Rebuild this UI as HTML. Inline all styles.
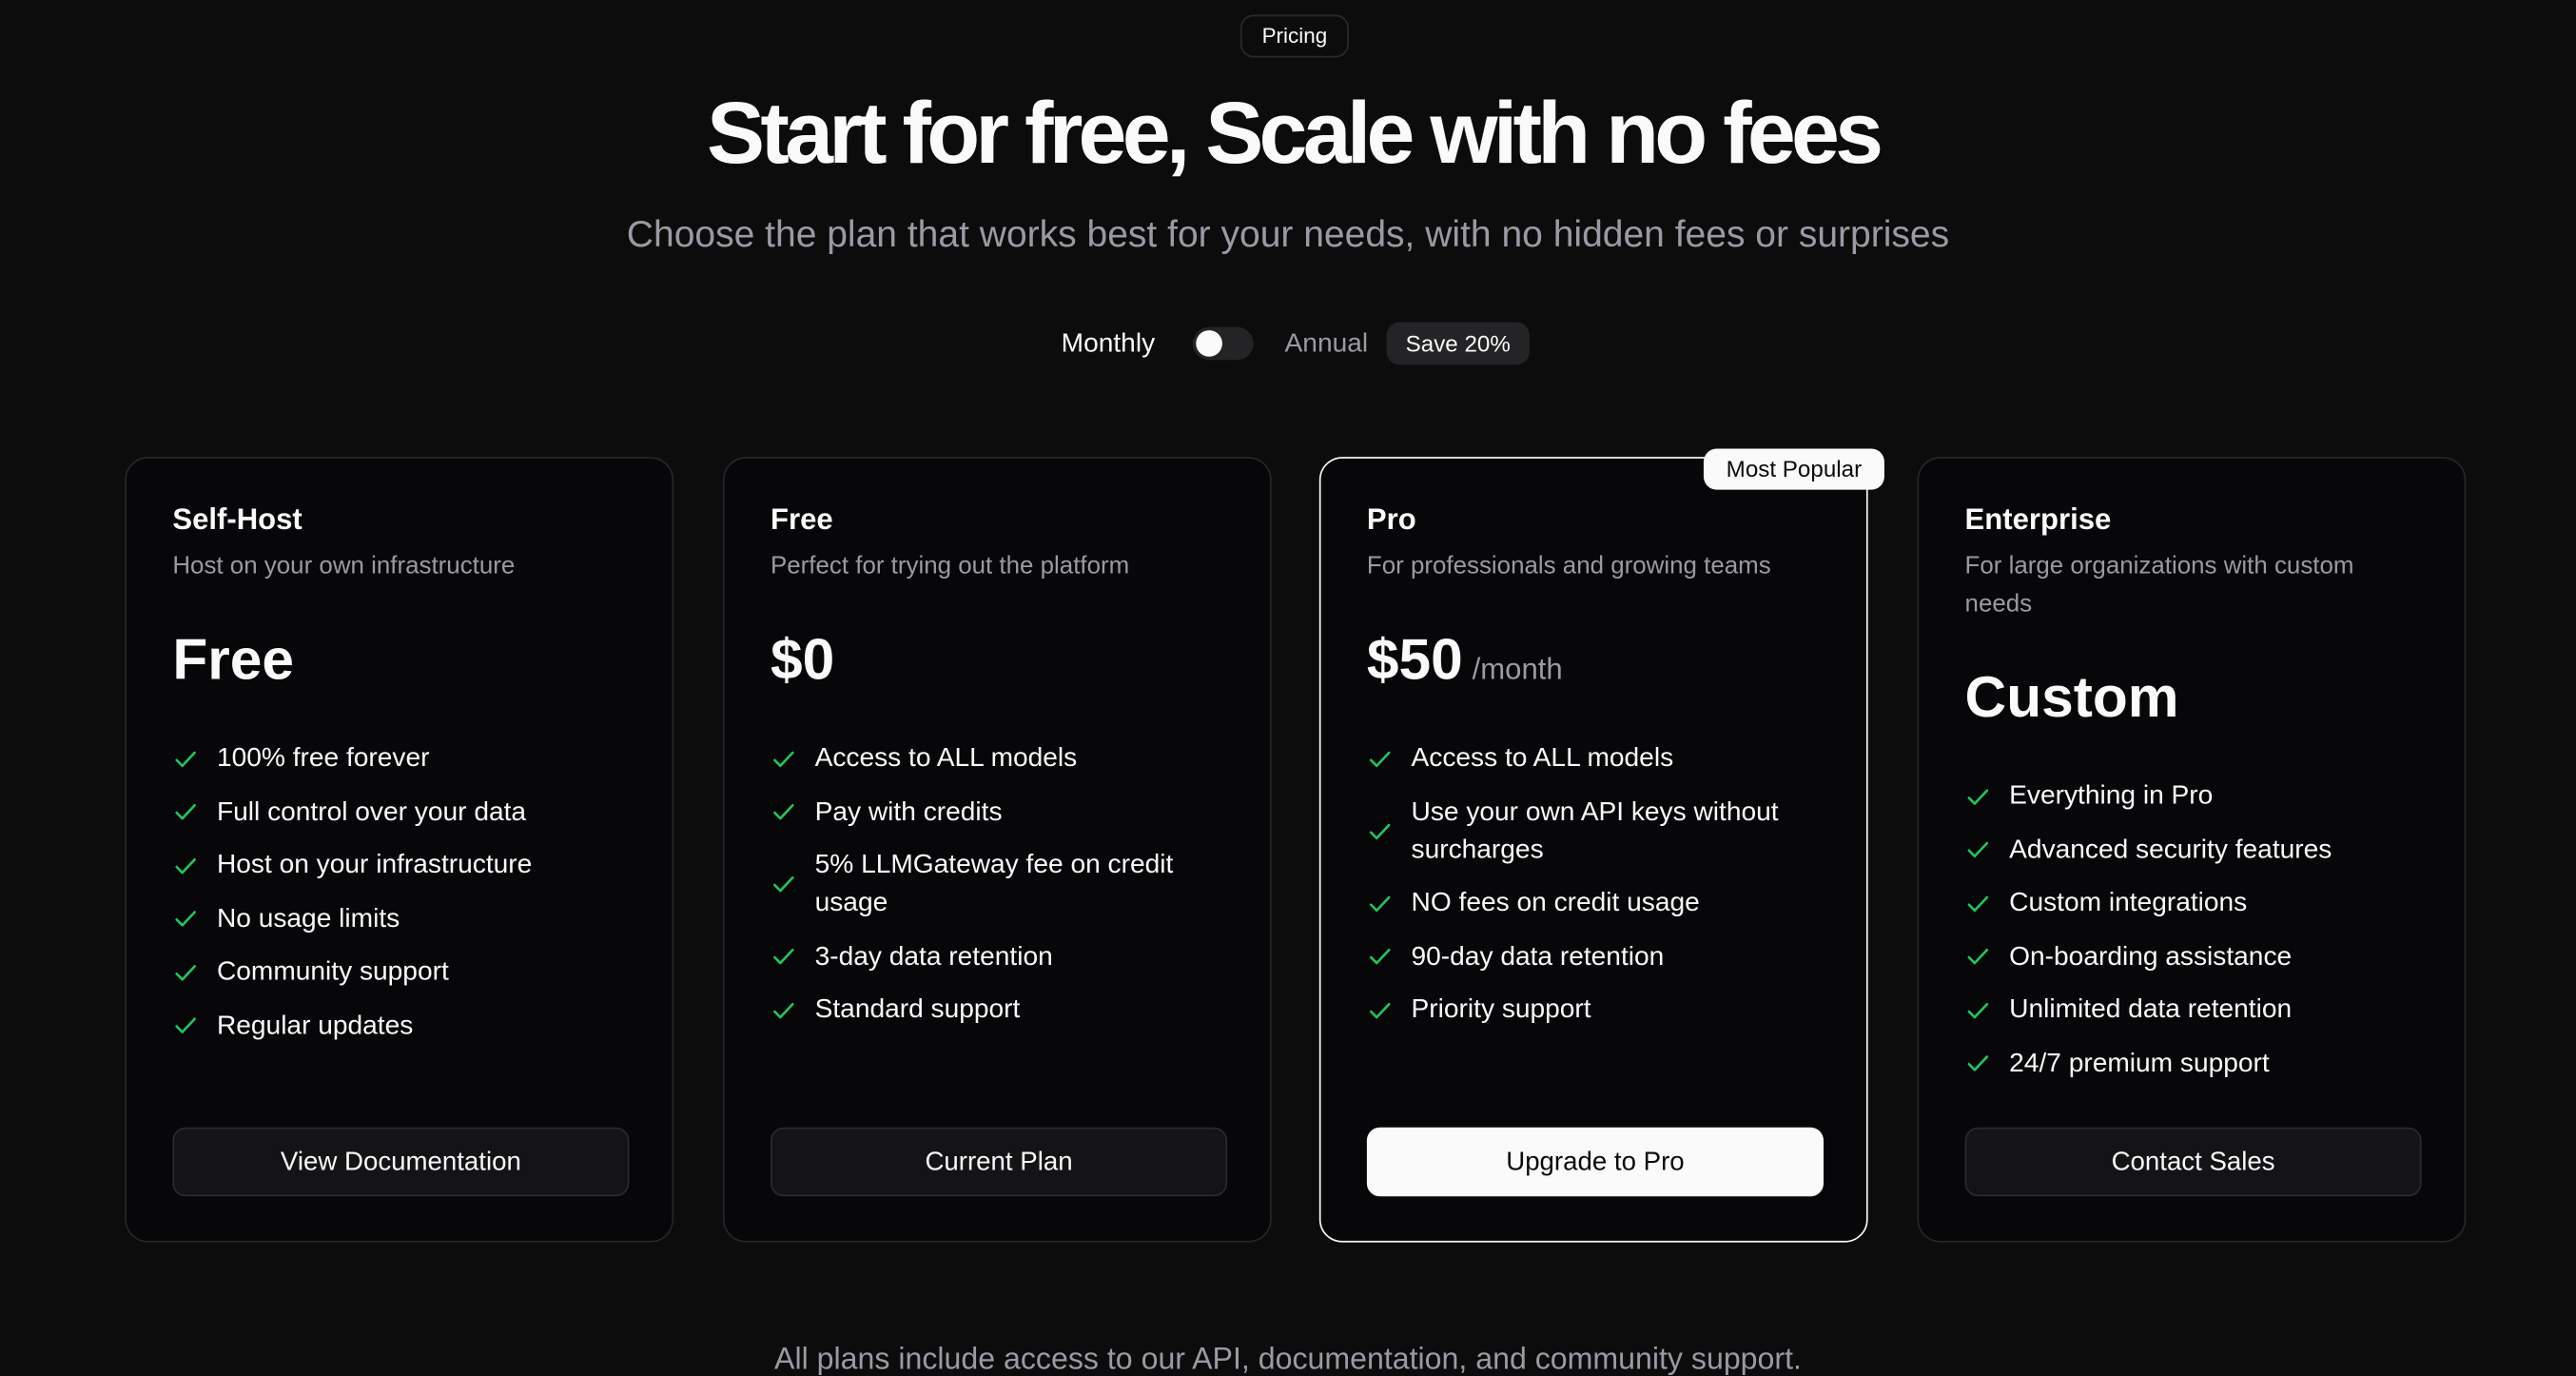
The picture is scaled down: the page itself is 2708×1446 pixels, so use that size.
<!DOCTYPE html>
<html><head><meta charset="utf-8"><style>
html,body{margin:0;padding:0;background:#0c0c0c;width:2708px;height:1446px;overflow:hidden}
#w{width:1568px;height:837px;transform:scale(1.72704);transform-origin:0 0;position:relative;font-family:"Liberation Sans",sans-serif;color:#fafafa}
.abs{position:absolute}
.badge{left:755px;top:9px;width:64px;height:24px;border:1px solid #2a2a2c;border-radius:8px;font-size:13px;line-height:24px;text-align:center}
h1{position:absolute;left:6px;right:0;top:50px;margin:0;text-align:center;font-size:53px;font-weight:700;letter-spacing:-2.75px;line-height:64px}
.sub{left:0;right:0;top:130px;text-align:center;font-size:22.6px;color:#9a9aa4}
.card{position:absolute;top:278px;width:332px;height:476px;border:1px solid #26262a;border-radius:14px;background:#070709}
.card.pro{border-color:#f4f4f4}
.card .t{position:absolute;left:28px;top:27px;font-size:18px;font-weight:700}
.d{position:absolute;left:28px;top:54px;font-size:15px;line-height:23px;color:#9a9aa4;width:280px}
.p{position:absolute;left:28px;top:103px;font-size:35px;font-weight:700}
.p span{font-size:18px;font-weight:400;color:#9a9aa4;margin-left:-4px}
ul{position:absolute;left:28px;top:171px;margin:0;padding:0;list-style:none;width:292px}
li{display:flex;align-items:center;font-size:16.3px;line-height:23px;min-height:23px;margin-bottom:9.5px}
li svg{flex:none;width:16px;height:16px;margin-right:11px}
.btn{position:absolute;left:28px;top:407px;width:276px;height:40px;border:1px solid #2a2a2c;border-radius:8px;background:#141417;text-align:center;line-height:41px;font-size:16px}
.pro .btn{background:#fafafa;color:#0a0a0a;border-color:#fafafa}
</style></head><body><div id="w">
<div class="abs badge">Pricing</div>
<h1>Start for free, Scale with no fees</h1>
<div class="abs sub">Choose the plan that works best for your needs, with no hidden fees or surprises</div>
<div class="abs" style="left:646px;top:200px;font-size:16.3px">Monthly</div>
<div class="abs" style="left:726px;top:199px;width:37px;height:20px;border-radius:10px;background:#242427"><div style="position:absolute;left:2px;top:2px;width:16px;height:16px;border-radius:50%;background:#fafafa"></div></div>
<div class="abs" style="left:782px;top:200px;font-size:16.3px;color:#9a9aa4">Annual</div>
<div class="abs" style="left:844px;top:196px;width:87px;height:26px;border-radius:8px;background:#242427;font-size:14px;line-height:26px;text-align:center">Save 20%</div>

<svg width="0" height="0" style="position:absolute"><defs><symbol id="c" viewBox="0 0 16 16"><path d="M2.5 8.5l3.5 3.5 7.5-8" fill="none" stroke="#22c55e" stroke-width="1.5" stroke-linecap="round" stroke-linejoin="round"/></symbol></defs></svg>

<div class="card" style="left:76px">
<div class="t">Self-Host</div><div class="d">Host on your own infrastructure</div>
<div class="p">Free</div>
<ul><li><svg><use href="#c"/></svg>100% free forever</li><li><svg><use href="#c"/></svg>Full control over your data</li><li><svg><use href="#c"/></svg>Host on your infrastructure</li><li><svg><use href="#c"/></svg>No usage limits</li><li><svg><use href="#c"/></svg>Community support</li><li><svg><use href="#c"/></svg>Regular updates</li></ul>
<div class="btn">View Documentation</div></div>

<div class="card" style="left:440px">
<div class="t">Free</div><div class="d">Perfect for trying out the platform</div>
<div class="p">$0</div>
<ul><li><svg><use href="#c"/></svg>Access to ALL models</li><li><svg><use href="#c"/></svg>Pay with credits</li><li><svg><use href="#c"/></svg>5% LLMGateway fee on credit usage</li><li><svg><use href="#c"/></svg>3-day data retention</li><li><svg><use href="#c"/></svg>Standard support</li></ul>
<div class="btn">Current Plan</div></div>

<div class="card pro" style="left:803px">
<div class="t">Pro</div><div class="d">For professionals and growing teams</div>
<div class="p">$50 <span>/month</span></div>
<ul><li><svg><use href="#c"/></svg>Access to ALL models</li><li><svg><use href="#c"/></svg>Use your own API keys without surcharges</li><li><svg><use href="#c"/></svg>NO fees on credit usage</li><li><svg><use href="#c"/></svg>90-day data retention</li><li><svg><use href="#c"/></svg>Priority support</li></ul>
<div class="btn">Upgrade to Pro</div>
<div class="abs" style="left:233px;top:-6px;width:110px;height:25px;border-radius:8px;background:#fafafa;color:#0a0a0a;font-size:14px;line-height:25px;text-align:center">Most Popular</div></div>

<div class="card" style="left:1167px">
<div class="t">Enterprise</div><div class="d">For large organizations with custom needs</div>
<div class="p" style="top:126px">Custom</div>
<ul style="top:194px"><li><svg><use href="#c"/></svg>Everything in Pro</li><li><svg><use href="#c"/></svg>Advanced security features</li><li><svg><use href="#c"/></svg>Custom integrations</li><li><svg><use href="#c"/></svg>On-boarding assistance</li><li><svg><use href="#c"/></svg>Unlimited data retention</li><li><svg><use href="#c"/></svg>24/7 premium support</li></ul>
<div class="btn">Contact Sales</div></div>

<div class="abs" style="left:0;right:0;top:816px;text-align:center;font-size:18.6px;color:#9a9aa4">All plans include access to our API, documentation, and community support.</div>
</div></body></html>
